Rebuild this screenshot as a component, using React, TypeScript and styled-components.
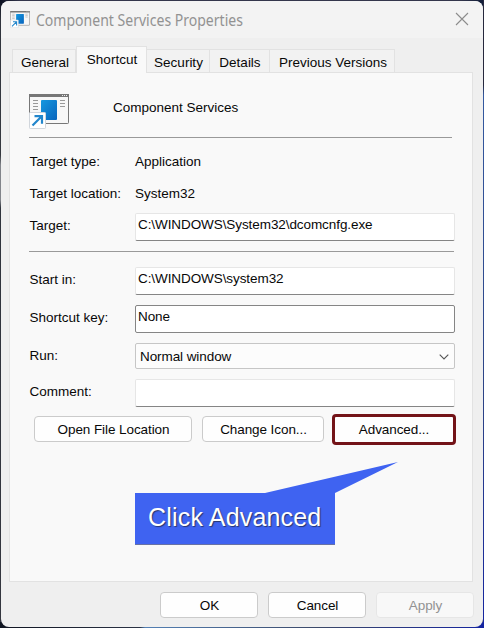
import React from "react";
import styled, { createGlobalStyle } from "styled-components";

const GlobalStyle = createGlobalStyle`
  * { box-sizing: border-box; }
  body { margin: 0; overflow: hidden; background: #232b3c; }
`;

const Desktop = styled.div`
  width: 484px;
  height: 628px;
  padding: 1px;
  background:
    linear-gradient(#26283d, #26283d 85px, #33589f 95px, #2c4386 400px, #1424a0) right / 1px 100% no-repeat,
    linear-gradient(90deg, #101522, #2b3345 140px, #5380b4 145px, #3b4868 320px, #1424a0) bottom / 100% 6px no-repeat,
    linear-gradient(#0b1020, #30343d 20px, #35383f 155px, #82858b 165px, #82858b 200px, #30343d 208px, #34363f) left / 1px 100% no-repeat,
    linear-gradient(90deg, #0b1020, #34364c 20px, #34364c 460px, #101c38) top / 100% 8px no-repeat,
    #26283d;
  font: 13.5px/18px "Liberation Sans", Arial, sans-serif;
  color: #080808;
`;

const Dialog = styled.div`
  display: flex;
  flex-direction: column;
  width: 482px;
  height: 626px;
  border-radius: 8px;
  background: #efefef;
  overflow: hidden;
`;

const TitleBar = styled.header`
  display: flex;
  align-items: center;
  height: 37px;
  padding: 0 14px 0 9px;
  background: #f3f3f3;
`;

const Title = styled.h1`
  flex: 1;
  margin: 0 0 0 6px;
  font: 400 16px/20px "Noto Sans", sans-serif;
  color: #929292;
  transform: scaleX(0.877);
  transform-origin: left;
`;

const CloseButton = styled.button`
  display: flex;
  padding: 0;
  margin-bottom: 1px;
  border: 0;
  background: none;
`;

const TabList = styled.nav`
  display: flex;
  align-items: flex-end;
  height: 34px;
  padding-left: 11px;
  position: relative;
`;

const Tab = styled.button<{ $width: number; $selected?: boolean }>`
  width: ${(p) => p.$width}px;
  height: ${(p) => (p.$selected ? 27 : 23)}px;
  margin-bottom: ${(p) => (p.$selected ? -1 : 0)}px;
  padding: ${(p) => (p.$selected ? "0 0 0 1px" : "3px 0 0 1px")};
  border: 1px solid #e2e2e2;
  border-left-width: ${(p) => (p.$selected ? 1 : 0)}px;
  border-bottom: 0;
  background: ${(p) => (p.$selected ? "#f9f9f9" : "#f2f2f2")};
  font: inherit;
  color: inherit;
  white-space: nowrap;

  &:first-child {
    padding-left: 2px;
    border-left-width: 1px;
  }

  &:last-child { padding-left: 2px; }
`;

const Panel = styled.main`
  width: 464px;
  height: 510px;
  margin-left: 8px;
  padding: 0 17px 0 19px;
  border: 1px solid #e2e2e2;
  background: #f9f9f9;
`;

const Summary = styled.div`
  display: flex;
  align-items: center;
  height: 64px;
  padding-top: 13px;
`;

const ProgramName = styled.div`
  margin: -7px 0 0 44px;
`;

const Divider = styled.hr<{ $width: number }>`
  width: ${(p) => p.$width}px;
  height: 1px;
  margin: 0;
  border: 0;
  background: #9a9a9a;
`;

const Rows = styled.div<{ $top: number }>`
  padding: ${(p) => p.$top}px 0 0;
`;

const Row = styled.div<{ $height: number }>`
  display: grid;
  grid-template-columns: 106px 320px;
  align-items: center;
  height: ${(p) => p.$height}px;
`;

const Label = styled.label<{ $lift?: number }>`
  padding-left: 0.5px;
  padding-bottom: ${(p) => p.$lift ?? 0}px;
`;

const Field = styled.div<{ $outlined?: boolean }>`
  height: 28px;
  padding: 2px 2px;
  border: 1px solid ${(p) => (p.$outlined ? "#858585" : "#e6e6e6")};
  border-bottom-color: #858585;
  border-radius: 2px;
  background: #fff;
  letter-spacing: -0.08px;
`;

const Select = styled.div`
  display: flex;
  align-items: center;
  justify-content: space-between;
  height: 26px;
  padding: 1px 5px 0 4px;
  border: 1px solid #c6c6c6;
  border-radius: 2px;
  background: #fcfcfc;
  letter-spacing: -0.08px;
`;

const Button = styled.button<{ $width: number }>`
  flex-shrink: 0;
  width: ${(p) => p.$width}px;
  height: 26px;
  margin-bottom: 1px;
  padding: 2px 0 0 1px;
  border: 1px solid #cbcbcb;
  border-radius: 4px;
  background: #fefefe;
  font: inherit;
  color: inherit;
  letter-spacing: -0.08px;

  &:disabled {
    border-color: #e6e6e6;
    background: #f8f8f8;
    color: #929292;
  }
`;

const HighlightedButton = styled(Button)`
  height: 31px;
  margin: 0 0 0 -2px;
  padding: 0;
  border: 3px solid #731318;
`;

const Actions = styled.div`
  display: flex;
  align-items: center;
  gap: 10px;
  height: 31px;
  margin: 2px 0 0 5px;
`;

const Callout = styled.div`
  position: relative;
  width: 200px;
  height: 52px;
  margin: 48px 0 0 106px;
  background: #3f63f1;
  border-bottom: 1px solid #6872a5;
  color: #fff;
  font-size: 25px;
  letter-spacing: 0.18px;
  line-height: 49px;
  padding-left: 13px;
  white-space: nowrap;
  text-shadow: 1px 1px 1px #26356f;
`;

const Pointer = styled.svg`
  position: absolute;
  left: 130px;
  top: -31px;
`;

const Footer = styled.footer`
  display: flex;
  justify-content: flex-end;
  gap: 10px;
  padding: 10px 9px 0 0;
`;

const ShortcutIcon = ({ width, height }: { width: number; height: number }) => (
  <svg width={width} height={height} viewBox="0 0 40 35">
    <defs>
      <linearGradient id="tile" x2="1" y2="1">
        <stop stopColor="#1598df" />
        <stop offset="1" stopColor="#0864bd" />
      </linearGradient>
    </defs>
    <rect x=".5" y=".5" width="39" height="29" rx=".8" fill="#f7f7f7" stroke="#777" />
    <path d="M0 0H40V3H0Z" fill="#777" />
    <path d="M33 1.5h1m1 0h1m1 0h1" stroke="#eee" />
    <path d="M4 6.5h5M4 9.5h5M4 12.5h5M4 15.5h5M31 6.5h5M31 9.5h5M31 12.5h5" stroke="#999" />
    <rect x="12" y="6" width="16" height="20" rx="1" fill="url(#tile)" />
    <rect x=".5" y="18.5" width="16" height="16" rx=".7" fill="#fff" stroke="#d1d6dc" />
    <path d="M3.5 31.5L12.2 22.8M5.5 22.2H13v7.6" fill="none" stroke="#2286cc" strokeWidth="2.2" />
  </svg>
);

export default function App() {
  return (
    <Desktop>
      <GlobalStyle />
      <Dialog role="dialog">
        <TitleBar>
          <ShortcutIcon width={20} height={17} />
          <Title>Component Services Properties</Title>
          <CloseButton aria-label="Close">
            <svg width="14" height="14" viewBox="0 0 14 14">
              <path d="M1 1L13 13M13 1L1 13" stroke="#8c8c8c" strokeWidth="1.1" />
            </svg>
          </CloseButton>
        </TitleBar>
        <TabList>
          <Tab $width={64}>General</Tab>
          <Tab $width={71} $selected>Shortcut</Tab>
          <Tab $width={63}>Security</Tab>
          <Tab $width={60}>Details</Tab>
          <Tab $width={125}>Previous Versions</Tab>
        </TabList>
        <Panel>
          <Summary>
            <ShortcutIcon width={40} height={35} />
            <ProgramName>Component Services</ProgramName>
          </Summary>
          <Divider $width={423} />
          <Rows $top={8}>
            <Row $height={32}><Label>Target type:</Label><span>Application</span></Row>
            <Row $height={32}><Label>Target location:</Label><span>System32</span></Row>
            <Row $height={34}><Label $lift={3}>Target:</Label><Field>C:\WINDOWS\System32\dcomcnfg.exe</Field></Row>
          </Rows>
          <Rows $top={7}>
            <Divider $width={425} />
          </Rows>
          <Rows $top={10}>
            <Row $height={38}><Label $lift={3}>Start in:</Label><Field>C:\WINDOWS\system32</Field></Row>
            <Row $height={38}><Label $lift={3}>Shortcut key:</Label><Field $outlined>None</Field></Row>
            <Row $height={36}>
              <Label $lift={1}>Run:</Label>
              <Select>
                Normal window
                <svg width="10" height="6" viewBox="0 0 10 6">
                  <path d="M.7 .7L5 5L9.3 .7" fill="none" stroke="#555" strokeWidth="1.1" />
                </svg>
              </Select>
            </Row>
            <Row $height={38}><Label $lift={3}>Comment:</Label><Field /></Row>
          </Rows>
          <Actions>
            <Button $width={158}>Open File Location</Button>
            <Button $width={122}>Change Icon...</Button>
            <HighlightedButton $width={124}>Advanced...</HighlightedButton>
          </Actions>
          <Callout>
            Click Advanced
            <Pointer width="134" height="32" viewBox="0 0 134 32">
              <path d="M0 31L133 0L70 31V32H0Z" fill="#3f63f1" />
            </Pointer>
          </Callout>
        </Panel>
        <Footer>
          <Button $width={98}>OK</Button>
          <Button $width={98}>Cancel</Button>
          <Button $width={98} disabled>Apply</Button>
        </Footer>
      </Dialog>
    </Desktop>
  );
}
